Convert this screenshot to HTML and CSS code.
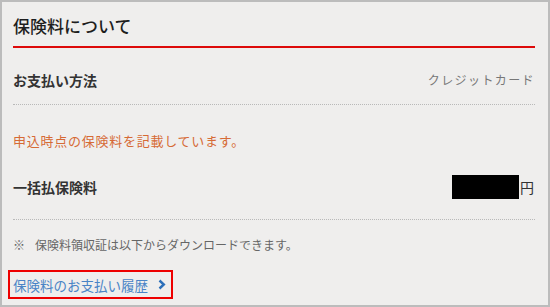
FILE: index.html
```html
<!DOCTYPE html>
<html lang="ja">
<head>
    <meta charset="UTF-8">
    <meta name="viewport" content="width=device-width, initial-scale=1.0">
    <link rel="stylesheet" href="styles.css">
</head>
<body>

    <div class="panel">
        <h2 class="title">保険料について</h2>

        <div class="row row-method">
            <span class="label">お支払い方法</span>
            <span class="value">クレジットカード</span>
        </div>

        <p class="note">申込時点の保険料を記載しています。</p>

        <div class="row row-amount">
            <span class="label">一括払保険料</span>
            <span class="amount"><span class="masked"></span>円</span>
        </div>

        <p class="notice"><span class="mark">※</span>保険料領収証は以下からダウンロードできます。</p>

        <a class="history" href="#">保険料のお支払い履歴
            <svg class="chevron" width="8" height="11" viewBox="0 0 8 11">
                <path d="M1.5 1.5 L5.8 5.5 L1.5 9.5" fill="none" stroke="#2c6fb9" stroke-width="2.4"/>
            </svg>
        </a>
    </div>

</body>
</html>
```

FILE: styles.css
```css
body {
    margin: 0;
    font-family: "Noto Sans CJK JP", "Noto Sans", sans-serif;
    background-color: #efeeed;
}
.panel {
    box-sizing: border-box;
    width: 550px;
    height: 307px;
    padding: 0 13px 0 11px;
    border: 2px solid #bcbcbc;
    background-color: #efeeed;
}
.title {
    margin: 0;
    padding: 12px 0 8px 0;
    font-size: 17px;
    line-height: 24px;
    font-weight: 500;
    color: #1e1e1e;
    border-bottom: 2px solid #dd0a0a;
}
.row {
    display: flex;
    justify-content: space-between;
    align-items: center;
    border-bottom: 1px dotted #b9b9b9;
}
.row-method {
    padding: 22px 0 14px 0;
    line-height: 20px;
}
.row-amount {
    padding: 24px 1px 20px 0;
    line-height: 24px;
}
.label {
    font-size: 14px;
    font-weight: bold;
    color: #333;
}
.value {
    font-size: 12px;
    letter-spacing: 1.4px;
    color: #777;
}
.note {
    margin: 26px 0 0 0;
    font-size: 13px;
    line-height: 20px;
    letter-spacing: 0.75px;
    color: #d66a35;
}
.amount {
    display: flex;
    align-items: center;
    font-size: 14px;
    color: #333;
}
.masked {
    display: inline-block;
    width: 67px;
    height: 24px;
    margin-right: 1px;
    background-color: #000;
}
.notice {
    margin: 16px 0 0 0;
    font-size: 12px;
    line-height: 18px;
    color: #666;
}
.mark {
    margin-right: 10px;
}
.history {
    display: inline-flex;
    align-items: center;
    margin: 16px 0 0 -5px;
    padding: 2px 5px 2px 3px;
    height: 21px;
    border: 2px solid #ee0000;
    font-size: 13.5px;
    color: #4a84c6;
    text-decoration: none;
}
.chevron {
    margin-left: 10px;
}
```
